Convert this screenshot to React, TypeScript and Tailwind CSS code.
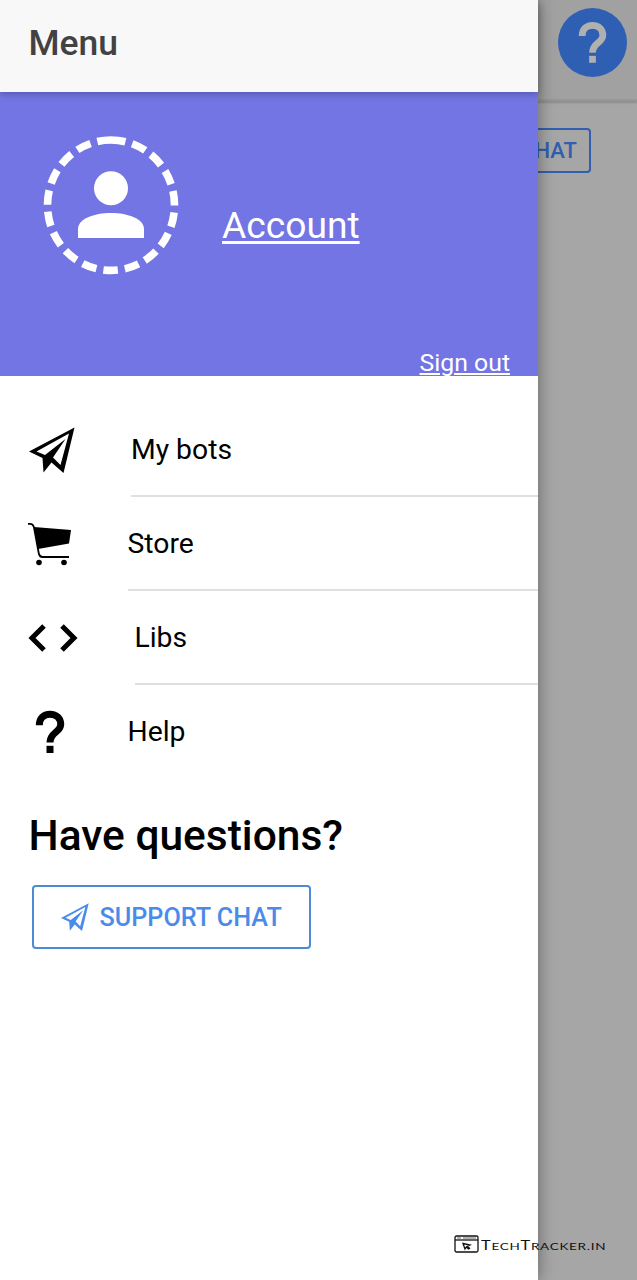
import type { ReactNode } from "react";

function PlaneIcon({ className }: { className: string }) {
  return (
    <svg viewBox="0 0 46 46" className={className} fill="currentColor">
      <path
        fillRule="evenodd"
        d="M45.5 0.5 34.5 46 22.5 35.5 14.5 45.5 13.5 31 0 24.5ZM40 6.5 7.5 24.4 16 28 36.5 12 24 30.5 31.5 38Z"
      />
    </svg>
  );
}

function CartIcon() {
  return (
    <svg viewBox="0 0 44 44" className="h-11 w-11 shrink-0">
      <path d="M0 1.8H2C4.8 1.8 5.4 3 6 5.5L10.8 31.5Q11.5 35 14.5 35H41" fill="none" stroke="#000" strokeWidth="1.8" />
      <path d="M6 5 43 8 41 21.5 10 27Z" />
      <circle cx="11" cy="40.5" r="2.8" />
      <circle cx="36" cy="40.5" r="2.8" />
    </svg>
  );
}

function CodeIcon() {
  return (
    <svg viewBox="0 0 50 30" className="h-[30px] w-[50px] shrink-0" fill="none" stroke="#000" strokeWidth="5">
      <path d="M16 3 4 15 16 27M34 3 46 15 34 27" />
    </svg>
  );
}

function QuestionIcon({ className }: { className: string }) {
  return (
    <svg viewBox="0 0 30 44" className={className}>
      <path
        d="M4.3 15.2C4.3 8.5 8.5 4.2 15 4.2S25.7 8.5 25.7 14.5C25.7 22.5 15 22 15 32.5"
        fill="none"
        stroke="currentColor"
        strokeWidth="7"
      />
      <path d="M11.5 35.8H18.5V43H11.5Z" fill="currentColor" />
    </svg>
  );
}

function Avatar() {
  return (
    <svg viewBox="0 0 136 140" className="h-[140px] w-[136px]" fill="#fff">
      <path
        d="M68 5A63.5 65.2 0 0 1 68 135.4A63.5 65.2 0 0 1 68 5"
        fill="none"
        stroke="#fff"
        strokeWidth="7.6"
        strokeDasharray="14.6 7.06"
      />
      <circle cx="68" cy="53.3" r="17" />
      <path d="M35 103V94C35 84 51 78 68 78S101 84 101 94V103Z" />
    </svg>
  );
}

function MenuRow({ icon, gap, label, divider = true }: { icon: ReactNode; gap: string; label: string; divider?: boolean }) {
  return (
    <li className="flex h-[94px] items-stretch pl-7">
      <span className={`flex shrink-0 items-center ${gap}`}>{icon}</span>
      <span className={`flex flex-1 items-center text-[28.3px] ${divider ? "border-b-2 border-[#e0e0e0] pt-1" : "pt-0.5"}`}>
        {label}
      </span>
    </li>
  );
}

export default function App() {
  return (
    <div className="relative h-[1280px] w-[637px] overflow-hidden bg-[#a6a6a6] font-['Roboto',sans-serif] text-black">
      <header className="flex h-[101px] justify-end border-b-2 border-[#979797] bg-[#a1a1a1] pr-[10px] pt-2 shadow-[0_2px_2px_#8c8c8c]">
        <div className="flex h-[69px] w-[69px] items-center justify-center rounded-full bg-[#2f5fb3] text-[#b0b0b0]">
          <QuestionIcon className="h-[43px] w-[29px]" />
        </div>
      </header>
      <div className="flex justify-end pr-[46px] pt-[27px]">
        <div className="flex h-[45px] w-[180px] items-center justify-end rounded-[4px] border-2 border-[#315fae] pr-3 text-[22px] font-medium text-[#315fae]">
          SUPPORT CHAT
        </div>
      </div>

      <aside className="absolute inset-y-0 left-0 flex w-[538px] flex-col bg-white shadow-[0_0_16px_rgba(0,0,0,0.4)]">
        <div className="z-10 flex h-[92px] shrink-0 items-center bg-[#f8f8f8] pb-[5px] pl-[28.5px] text-[35.5px] font-medium text-[#424242] shadow-[0_2px_7px_rgba(0,0,0,0.25)]">
          Menu
        </div>
        <section className="flex h-[284px] shrink-0 flex-col justify-between bg-[#7375e4] text-white">
          <div className="flex items-center gap-[43px] pl-[43px] pt-[43px]">
            <Avatar />
            <a className="pt-[41px] text-[37.2px] leading-none underline decoration-[3px] underline-offset-[3px]">Account</a>
          </div>
          <a className="self-end pr-7 text-[24.8px] leading-[27px] underline decoration-2 underline-offset-2">Sign out</a>
        </section>
        <ul className="mt-[26.5px]">
          <MenuRow icon={<PlaneIcon className="ml-px h-[46px] w-[46px]" />} gap="mr-14" label="My bots" />
          <MenuRow icon={<CartIcon />} gap="mr-[55.5px]" label="Store" />
          <MenuRow icon={<CodeIcon />} gap="mr-[56.5px]" label="Libs" />
          <MenuRow icon={<QuestionIcon className="ml-[7px] h-11 w-[30px]" />} gap="mr-[62.5px]" label="Help" divider={false} />
        </ul>
        <h2 className="mt-[32.5px] pl-[28.5px] text-[42.5px] font-medium leading-[50px]">Have questions?</h2>
        <button className="ml-8 mt-6 flex h-16 w-[279px] items-center gap-[10.5px] rounded-[4px] border-2 border-[#4b8bd4] pl-[27px] text-[25.2px] font-medium text-[#4a8bea]">
          <PlaneIcon className="h-7 w-7" />
          <span className="pt-0.5">SUPPORT CHAT</span>
        </button>
      </aside>

      <div className="absolute left-[454px] top-[1235px] flex items-center gap-[2px]">
        <svg viewBox="0 0 25 18" className="h-[18px] w-[25px]" fill="none" stroke="#111" strokeWidth="1.3">
          <rect x="1" y="1" width="23" height="16" rx="1.5" />
          <path d="M1 5H24" />
          <path d="M3 3H7M9 3H22" strokeWidth="1" opacity=".65" />
          <path d="M9 8.5 16 10 13.5 11.2 15.5 13.4 14.5 14 12.3 12 11 14Z" />
        </svg>
        <span className="origin-left scale-x-[1.3] whitespace-nowrap pt-[3px] font-['Lato',sans-serif] text-[10.4px] leading-[14px] tracking-[0.55px] text-[#111]">
          <span className="text-[12.6px]">T</span>ECH<span className="text-[12.6px]">T</span>RACKER.IN
        </span>
      </div>
    </div>
  );
}
